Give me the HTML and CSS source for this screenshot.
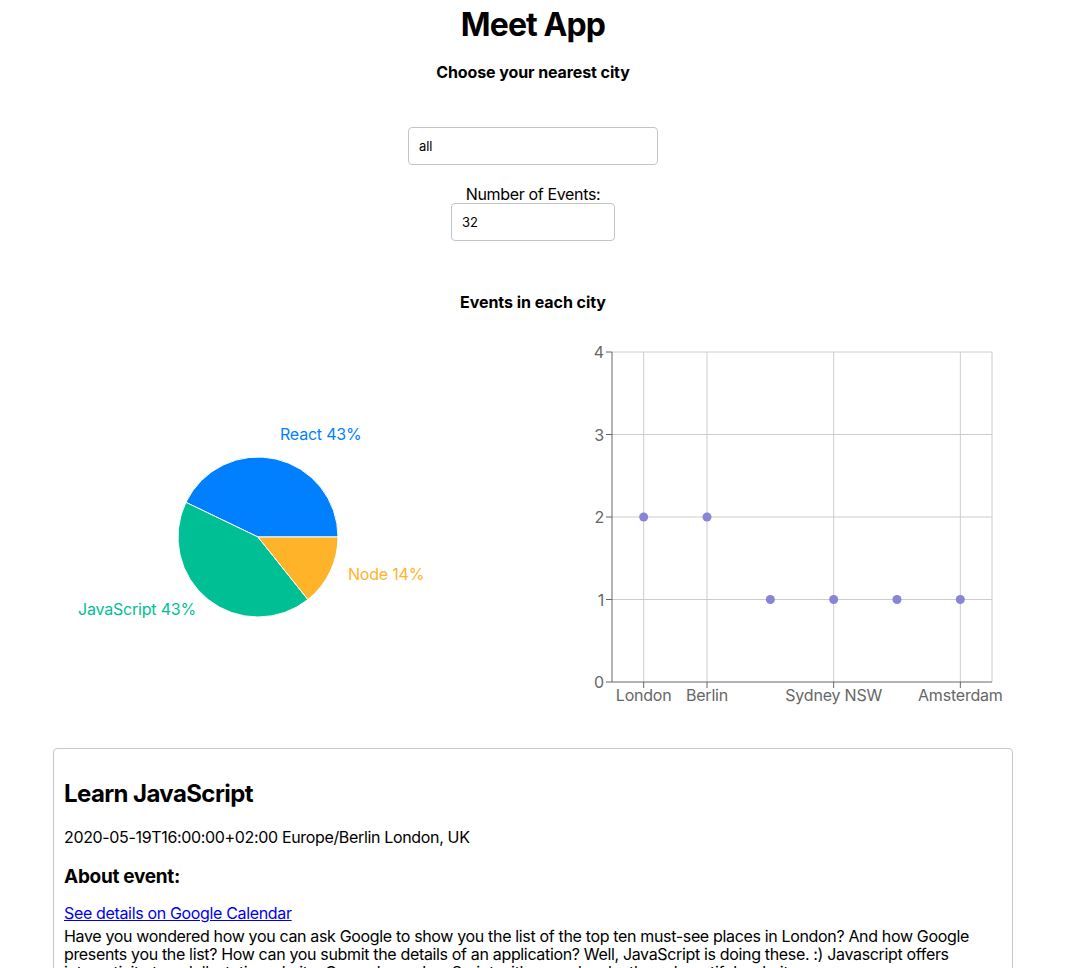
FILE: index.html
```html
<!DOCTYPE html>
<html lang="en">
<head>
<meta charset="utf-8">
<title>Meet App</title>
<link rel="stylesheet" href="styles.css">
</head>
<body>
<div class="app">
  <h1 class="title">Meet App</h1>
  <h4 class="subtitle">Choose your nearest city</h4>
  <div class="city-search">
    <input class="city" type="text" value="all">
  </div>
  <div class="number-of-events">
    <label class="noe-label">Number of Events:</label>
    <input class="noe-input" type="text" value="32">
  </div>
  <h4 class="chart-title">Events in each city</h4>
  <div class="charts">
    <svg class="pie" width="480" height="390" viewBox="0 0 480 390">
      <path d="M205,207 L285,207 A80,80 0 0,0 132.92,172.30 Z" fill="#0080FF" stroke="#fff" stroke-width="1"/>
      <path d="M205,207 L132.92,172.30 A80,80 0 0,0 254.88,269.55 Z" fill="#00BF94" stroke="#fff" stroke-width="1"/>
      <path d="M205,207 L254.88,269.55 A80,80 0 0,0 285,207 Z" fill="#FFB329" stroke="#fff" stroke-width="1"/>
      <text class="pie-label" x="227" y="104" fill="#0080FF">React 43%</text>
      <text class="pie-label" x="295" y="244" fill="#FFB329">Node 14%</text>
      <text class="pie-label" x="143" y="279" fill="#00BF94" text-anchor="end">JavaScript 43%</text>
    </svg>
    <svg class="scatter" width="480" height="390" viewBox="0 0 480 390">
      <g class="grid" stroke="#ccc" stroke-width="1">
        <line x1="79" y1="22" x2="459" y2="22"/>
        <line x1="79" y1="104.5" x2="459" y2="104.5"/>
        <line x1="79" y1="187" x2="459" y2="187"/>
        <line x1="79" y1="269.5" x2="459" y2="269.5"/>
        <line x1="110.67" y1="22" x2="110.67" y2="352"/>
        <line x1="174" y1="22" x2="174" y2="352"/>
        <line x1="300.67" y1="22" x2="300.67" y2="352"/>
        <line x1="427.33" y1="22" x2="427.33" y2="352"/>
        <line x1="459" y1="22" x2="459" y2="352"/>
      </g>
      <g class="axis" stroke="#666" stroke-width="1">
        <line x1="79" y1="22" x2="79" y2="352"/>
        <line x1="79" y1="352" x2="459" y2="352"/>
        <line x1="73" y1="22" x2="79" y2="22"/>
        <line x1="73" y1="104.5" x2="79" y2="104.5"/>
        <line x1="73" y1="187" x2="79" y2="187"/>
        <line x1="73" y1="269.5" x2="79" y2="269.5"/>
        <line x1="73" y1="352" x2="79" y2="352"/>
        <line x1="110.67" y1="352" x2="110.67" y2="358"/>
        <line x1="174" y1="352" x2="174" y2="358"/>
        <line x1="300.67" y1="352" x2="300.67" y2="358"/>
        <line x1="427.33" y1="352" x2="427.33" y2="358"/>
      </g>
      <g class="tick-labels" fill="#666">
        <text x="71" y="22" text-anchor="end">4</text>
        <text x="71" y="104.5" text-anchor="end">3</text>
        <text x="71" y="187" text-anchor="end">2</text>
        <text x="71" y="269.5" text-anchor="end">1</text>
        <text x="71" y="352" text-anchor="end">0</text>
        <text x="110.67" y="365" text-anchor="middle">London</text>
        <text x="174" y="365" text-anchor="middle">Berlin</text>
        <text x="300.67" y="365" text-anchor="middle">Sydney NSW</text>
        <text x="427.33" y="365" text-anchor="middle">Amsterdam</text>
      </g>
      <g class="points" fill="#8884d8">
        <circle cx="110.67" cy="187" r="4.5"/>
        <circle cx="174" cy="187" r="4.5"/>
        <circle cx="237.33" cy="269.5" r="4.5"/>
        <circle cx="300.67" cy="269.5" r="4.5"/>
        <circle cx="364" cy="269.5" r="4.5"/>
        <circle cx="427.33" cy="269.5" r="4.5"/>
      </g>
    </svg>
  </div>
  <ul class="event-list">
    <li class="event">
      <h2 class="event-title">Learn JavaScript</h2>
      <p class="event-time">2020-05-19T16:00:00+02:00 Europe/Berlin London, UK</p>
      <h3 class="event-about">About event:</h3>
      <a class="event-link" href="#">See details on Google Calendar</a>
      <p class="event-desc">Have you wondered how you can ask Google to show you the list of the top ten must-see places in London? And how Google presents you the list? How can you submit the details of an application? Well, JavaScript is doing these. :) Javascript offers interactivity to a dull, static website. Come, learn JavaScript with us and make those beautiful websites.</p>
    </li>
  </ul>
</div>
</body>
</html>
```

FILE: styles.css
```css
html, body {
  margin: 0;
  padding: 0;
  background: #fff;
}

body {
  font-family: Inter, "Noto Sans", sans-serif;
  color: #000;
  overflow: hidden;
  letter-spacing: -0.34px;
}

.app {
  display: flex;
  flex-direction: column;
  align-items: center;
  text-align: center;
}

.title {
  font-size: 32px;
  line-height: 38px;
  font-weight: 700;
  letter-spacing: -0.9px;
  margin: 6px 0 0;
}

.subtitle {
  font-size: 16px;
  line-height: 18px;
  font-weight: 700;
  letter-spacing: -0.1px;
  margin: 19px 0 0;
}

.city-search {
  margin-top: 46px;
}

.city,
.noe-input {
  box-sizing: border-box;
  height: 38px;
  border: 1px solid #c4c4c4;
  border-radius: 4px;
  padding: 0 10px;
  font-family: Inter, "Noto Sans", sans-serif;
  font-size: 13px;
  letter-spacing: -0.1px;
  color: #000;
  background: #fff;
  outline: none;
}

.city {
  width: 250px;
}

.number-of-events {
  display: flex;
  flex-direction: column;
  align-items: center;
  margin-top: 20px;
}

.noe-label {
  font-size: 16px;
  line-height: 18px;
}

.noe-input {
  width: 164px;
}

.chart-title {
  font-size: 16px;
  line-height: 18px;
  font-weight: 700;
  letter-spacing: -0.05px;
  margin: 52px 0 0;
}

.charts {
  display: flex;
  width: 960px;
  margin-top: 19px;
}

.charts svg {
  display: block;
  font-family: Inter, "Noto Sans", sans-serif;
}

.pie-label,
.tick-labels text {
  font-size: 16px;
  letter-spacing: -0.2px;
  dominant-baseline: central;
}

.event-list {
  list-style: none;
  margin: 28px 0 0;
  padding: 0;
  width: 960px;
}

.event {
  box-sizing: border-box;
  width: 960px;
  border: 1px solid #c8c8c8;
  border-radius: 4px;
  padding: 0 10px 20px;
  text-align: left;
}

.event-title {
  font-size: 24px;
  line-height: 28px;
  font-weight: 700;
  letter-spacing: -0.6px;
  margin: 31px 0 0;
}

.event-time {
  font-size: 16px;
  line-height: 19px;
  margin: 20px 0 0;
}

.event-about {
  font-size: 19px;
  line-height: 22px;
  font-weight: 700;
  letter-spacing: -0.3px;
  margin: 19px 0 0;
}

.event-link {
  display: block;
  font-size: 16px;
  line-height: 18px;
  color: #0000ee;
  margin-top: 16px;
}

.event-desc {
  font-size: 16px;
  line-height: 18px;
  margin: 5px 0 0;
}
```
